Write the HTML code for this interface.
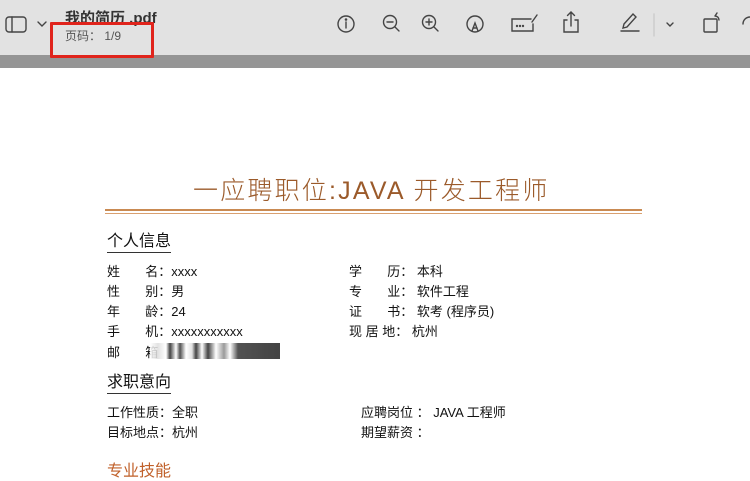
<!DOCTYPE html>
<html><head><meta charset="utf-8"><style>
body{margin:0;width:750px;height:465px;overflow:hidden;background:#fff;font-family:"Liberation Sans","Noto Sans CJK SC",sans-serif;position:relative}
.a{position:absolute;white-space:nowrap}
.tb{position:absolute;left:0;top:0;width:750px;height:55px;background:#e2e2e2}
.db{position:absolute;left:0;top:55px;width:750px;height:13px;background:#959595}
.t{font-size:13px;color:#111;line-height:16px}
.h{font-size:16px;color:#111;border-bottom:1px solid #333;line-height:20px}
svg{position:absolute}
</style></head><body>
<div class="tb"></div><div class="db"></div>
<svg style="left:0;top:0" width="750" height="54" fill="none" stroke="#444" stroke-width="1.4" stroke-linecap="round">
<rect x="6" y="17" width="20" height="15" rx="3"/><line x1="12" y1="17" x2="12" y2="32"/>
<path d="M38 22l4 4 4-4"/>
<circle cx="346" cy="24" r="8"/><line x1="346" y1="22" x2="346" y2="28"/><circle cx="346" cy="19.5" r=".6" fill="#444"/>
<circle cx="390" cy="22" r="6.5"/><line x1="387" y1="22" x2="393" y2="22"/><line x1="395" y1="27" x2="399" y2="31"/>
<circle cx="429" cy="22" r="6.5"/><line x1="426" y1="22" x2="432" y2="22"/><line x1="429" y1="19" x2="429" y2="25"/><line x1="434" y1="27" x2="438" y2="31"/>
<circle cx="475" cy="24" r="8"/><path d="M472 31l3-8 3 8M473 28h4"/>
<path d="M531 19h-19v12h21v-7"/><path d="M537 15l-5 7"/><circle cx="517" cy="26" r=".5"/><circle cx="520" cy="26" r=".5"/><circle cx="523" cy="26" r=".5"/>
<path d="M567 20h-3v12h14v-12h-3M571 26v-14M567.5 15.5l3.5-3.5 3.5 3.5"/>
<path d="M621 31h18M623 28l1-4 9-10 3 3-9 10z"/>
<line x1="654" y1="14" x2="654" y2="36" stroke="#ccc"/>
<path d="M667 23l3 3 3-3"/>
<rect x="704" y="19" width="13" height="13" rx="1"/><path d="M715 16a4 4 0 0 1 4 4M715 16l2-3"/>
<path d="M750 17a7 7 0 0 0 -7 7"/>
</svg>
<div class="a" style="left:65px;top:7px;font-size:15px;font-weight:bold;color:#333">我的简历 .pdf</div>
<div class="a" style="left:65px;top:27px;font-size:12px;color:#555">页码： 1/9</div>
<div class="a" style="left:50px;top:22px;width:104px;height:36px;border:3px solid #e0241c;box-sizing:border-box;border-radius:1px"></div>

<div class="a" style="left:193px;top:171px;font-size:25px;color:#9b5a2a;letter-spacing:2.2px;font-weight:300">一应聘职位:JAVA 开发工程师</div>
<div class="a" style="left:105px;top:209px;width:537px;height:2px;background:#c98a52"></div>
<div class="a" style="left:105px;top:213px;width:537px;height:1px;background:#d9a070"></div>

<div class="a h" style="left:107px;top:232px">个人信息</div>
<div class="a t" style="left:107px;top:264px">姓&nbsp;&nbsp;&nbsp;&nbsp;&nbsp;&nbsp;&nbsp;名：xxxx</div>
<div class="a t" style="left:107px;top:284px">性&nbsp;&nbsp;&nbsp;&nbsp;&nbsp;&nbsp;&nbsp;别：男</div>
<div class="a t" style="left:107px;top:304px">年&nbsp;&nbsp;&nbsp;&nbsp;&nbsp;&nbsp;&nbsp;龄：24</div>
<div class="a t" style="left:107px;top:324px">手&nbsp;&nbsp;&nbsp;&nbsp;&nbsp;&nbsp;&nbsp;机：xxxxxxxxxxx</div>
<div class="a t" style="left:107px;top:345px">邮&nbsp;&nbsp;&nbsp;&nbsp;&nbsp;&nbsp;&nbsp;箱</div>
<div class="a" style="left:150px;top:343px;width:130px;height:16px;background:linear-gradient(90deg,#fff 0,#ddd 8px,#fff 16px,#222 20px,#fff 26px,#333 30px,#fff 36px,#ddd 42px,#222 46px,#fff 52px,#222 58px,#fff 66px,#888 74px,#fff 80px,#333 88px,#222 130px);opacity:.85"></div>
<div class="a t" style="left:349px;top:264px">学&nbsp;&nbsp;&nbsp;&nbsp;&nbsp;&nbsp;&nbsp;历： 本科</div>
<div class="a t" style="left:349px;top:284px">专&nbsp;&nbsp;&nbsp;&nbsp;&nbsp;&nbsp;&nbsp;业： 软件工程</div>
<div class="a t" style="left:349px;top:304px">证&nbsp;&nbsp;&nbsp;&nbsp;&nbsp;&nbsp;&nbsp;书： 软考 (程序员)</div>
<div class="a t" style="left:349px;top:324px">现 居 地： 杭州</div>

<div class="a h" style="left:107px;top:373px">求职意向</div>
<div class="a t" style="left:107px;top:405px">工作性质：全职</div>
<div class="a t" style="left:107px;top:425px">目标地点：杭州</div>
<div class="a t" style="left:361px;top:405px">应聘岗位 ： JAVA 工程师</div>
<div class="a t" style="left:361px;top:425px">期望薪资 ：</div>
<div class="a" style="left:107px;top:457px;font-size:16px;color:#c0602a">专业技能</div>
</body></html>
